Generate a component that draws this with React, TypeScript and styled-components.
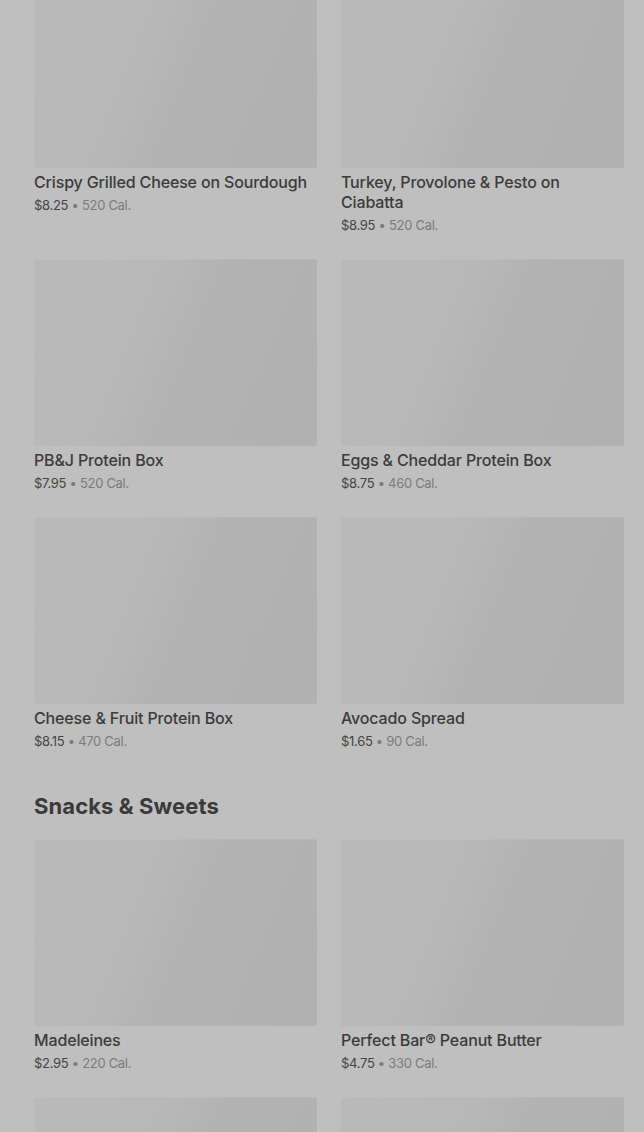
import React from "react";
import styled, { createGlobalStyle } from "styled-components";

type Item = { name: string; price: string; cal: string };

const sandwiches: Item[] = [
  { name: "Crispy Grilled Cheese on Sourdough", price: "$8.25", cal: "520 Cal." },
  { name: "Turkey, Provolone & Pesto on Ciabatta", price: "$8.95", cal: "520 Cal." },
  { name: "PB&J Protein Box", price: "$7.95", cal: "520 Cal." },
  { name: "Eggs & Cheddar Protein Box", price: "$8.75", cal: "460 Cal." },
  { name: "Cheese & Fruit Protein Box", price: "$8.15", cal: "470 Cal." },
  { name: "Avocado Spread", price: "$1.65", cal: "90 Cal." },
];

const snacks: Item[] = [
  { name: "Madeleines", price: "$2.95", cal: "220 Cal." },
  { name: "Perfect Bar® Peanut Butter", price: "$4.75", cal: "330 Cal." },
  { name: "", price: "", cal: "" },
  { name: "", price: "", cal: "" },
];

const GlobalStyle = createGlobalStyle`
  html, body {
    margin: 0;
    padding: 0;
    background: #bfbfbf;
    overflow: hidden;
  }
  body {
    font-family: Inter, "Noto Sans", sans-serif;
    -webkit-font-smoothing: antialiased;
  }
`;

const Page = styled.main`
  margin-top: -19px;
  padding: 0 20px 0 34px;
  height: 1151px;
  overflow: hidden;
`;

const Section = styled.section`
  & + & {
    margin-top: 41px;
  }
`;

const SectionTitle = styled.h2`
  margin: 0 0 19px;
  font-size: 22px;
  line-height: 28px;
  font-weight: 700;
  letter-spacing: 0.1px;
  color: #3a3a3a;
`;

const Grid = styled.div`
  display: grid;
  grid-template-columns: repeat(2, 283px);
  column-gap: 24px;
  row-gap: 24px;
`;

const Card = styled.article`
  display: flex;
  flex-direction: column;
`;

const Thumb = styled.div`
  height: 187px;
  border-radius: 2px;
  background: linear-gradient(112deg, #b9b9b9 0%, #b8b8b8 38%, #b2b2b2 56%, #b1b1b1 100%);
  box-shadow: inset 0 1px 0 rgba(255, 255, 255, 0.06);
`;

const Name = styled.h3`
  margin: 4px 0 0;
  padding-right: 6px;
  font-size: 16px;
  line-height: 20px;
  font-weight: 500;
  letter-spacing: -0.15px;
  color: #3b3b3b;
`;

const Meta = styled.p`
  margin: 3px 0 0;
  font-size: 13px;
  line-height: 20px;
  letter-spacing: -0.3px;
  color: #7b7b7b;
`;

const Price = styled.span`
  color: #444444;
`;

const MenuCard = ({ item }: { item: Item }) => (
  <Card>
    <Thumb />
    {item.name && <Name>{item.name}</Name>}
    {item.price && (
      <Meta>
        <Price>{item.price}</Price> • {item.cal}
      </Meta>
    )}
  </Card>
);

export default function App() {
  return (
    <>
      <GlobalStyle />
      <Page>
        <Section>
          <Grid>
            {sandwiches.map((item) => (
              <MenuCard key={item.name} item={item} />
            ))}
          </Grid>
        </Section>
        <Section>
          <SectionTitle>Snacks &amp; Sweets</SectionTitle>
          <Grid>
            {snacks.map((item, i) => (
              <MenuCard key={i} item={item} />
            ))}
          </Grid>
        </Section>
      </Page>
    </>
  );
}
